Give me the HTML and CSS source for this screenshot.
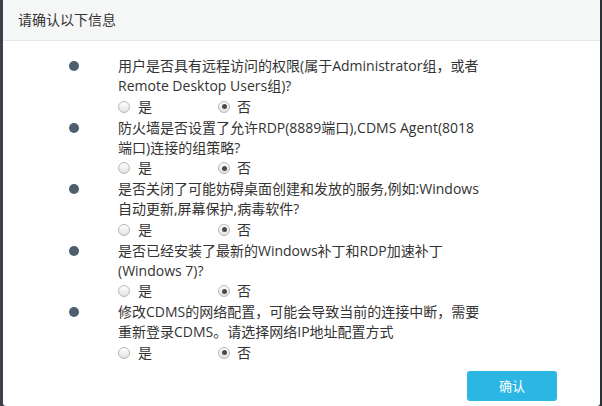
FILE: index.html
```html
<!DOCTYPE html>
<html lang="zh-CN">
<head>
<meta charset="utf-8">
<title>请确认以下信息</title>
<link rel="stylesheet" href="styles.css">
</head>
<body>
<div class="frame">
  <div class="strip strip-left"></div>
  <div class="dialog">
    <div class="header">请确认以下信息</div>
    <div class="content">
      <div class="item">
        <span class="bullet"></span>
        <div class="body">
          <div class="q">用户是否具有远程访问的权限(属于Administrator组，或者<br>Remote Desktop Users组)?</div>
          <div class="opts"><span class="opt"><span class="radio"></span>是</span><span class="opt"><span class="radio on"></span>否</span></div>
        </div>
      </div>
      <div class="item">
        <span class="bullet"></span>
        <div class="body">
          <div class="q">防火墙是否设置了允许RDP(8889端口),CDMS Agent(8018<br>端口)连接的组策略?</div>
          <div class="opts"><span class="opt"><span class="radio"></span>是</span><span class="opt"><span class="radio on"></span>否</span></div>
        </div>
      </div>
      <div class="item">
        <span class="bullet"></span>
        <div class="body">
          <div class="q">是否关闭了可能妨碍桌面创建和发放的服务,例如:Windows<br>自动更新,屏幕保护,病毒软件?</div>
          <div class="opts"><span class="opt"><span class="radio"></span>是</span><span class="opt"><span class="radio on"></span>否</span></div>
        </div>
      </div>
      <div class="item">
        <span class="bullet"></span>
        <div class="body">
          <div class="q">是否已经安装了最新的Windows补丁和RDP加速补丁<br>(Windows 7)?</div>
          <div class="opts"><span class="opt"><span class="radio"></span>是</span><span class="opt"><span class="radio on"></span>否</span></div>
        </div>
      </div>
      <div class="item">
        <span class="bullet"></span>
        <div class="body">
          <div class="q">修改CDMS的网络配置，可能会导致当前的连接中断，需要<br>重新登录CDMS。请选择网络IP地址配置方式</div>
          <div class="opts"><span class="opt"><span class="radio"></span>是</span><span class="opt"><span class="radio on"></span>否</span></div>
        </div>
      </div>
    </div>
    <div class="footer">
      <button class="btn">确认</button>
    </div>
  </div>
  <div class="strip strip-right"></div>
</div>
</body>
</html>
```

FILE: styles.css
```css
html, body {
  margin: 0;
  padding: 0;
  height: 100%;
  background: #ffffff;
}
body {
  font-family: "Open Sans", "Noto Sans CJK SC", sans-serif;
  color: #333333;
  font-size: 14px;
}
.frame {
  display: flex;
  height: 406px;
  width: 602px;
  background: #3c4049;
}
.strip-left {
  width: 3px;
  background: #3c4049;
}
.strip-right {
  width: 2px;
  background: #2e3138;
}
.dialog {
  flex: 1;
  background: #ffffff;
  display: flex;
  flex-direction: column;
  border-bottom-left-radius: 3px;
  border-bottom-right-radius: 3px;
}
.header {
  height: 40px;
  line-height: 40px;
  padding-left: 15px;
  background: #f5f6f6;
  border-bottom: 1px solid #e6e8e8;
  font-size: 14px;
  color: #333333;
}
.content {
  padding-top: 15px;
}
.item {
  display: flex;
  align-items: flex-start;
}
.bullet {
  width: 10px;
  height: 10px;
  border-radius: 50%;
  background: #4d5e6e;
  margin-left: 66px;
  margin-right: 39px;
  margin-top: 5px;
  flex: none;
}
.q {
  line-height: 20px;
  white-space: nowrap;
}
.opts {
  height: 21.5px;
  display: flex;
  align-items: center;
}
.opt {
  display: flex;
  align-items: center;
  width: 100px;
  line-height: 20px;
}
.opt + .opt {
  width: auto;
}
.radio {
  width: 10px;
  height: 10px;
  border-radius: 50%;
  border: 1px solid #b8b8b8;
  background: linear-gradient(#ffffff, #e2e2e2);
  margin-right: 8px;
  position: relative;
  flex: none;
}
.opt + .opt .radio {
  margin-right: 7px;
}
.radio.on::after {
  content: "";
  position: absolute;
  left: 2.5px;
  top: 2.5px;
  width: 5px;
  height: 5px;
  border-radius: 50%;
  background: #4a4a4a;
}
.footer {
  display: flex;
  justify-content: flex-end;
  padding-right: 43px;
  padding-top: 7px;
}
.btn {
  width: 90px;
  height: 30px;
  border: none;
  border-radius: 3px;
  background: #2bb6e4;
  color: #ffffff;
  font-family: "Noto Sans CJK SC", sans-serif;
  font-size: 13px;
  padding: 0;
}
```
